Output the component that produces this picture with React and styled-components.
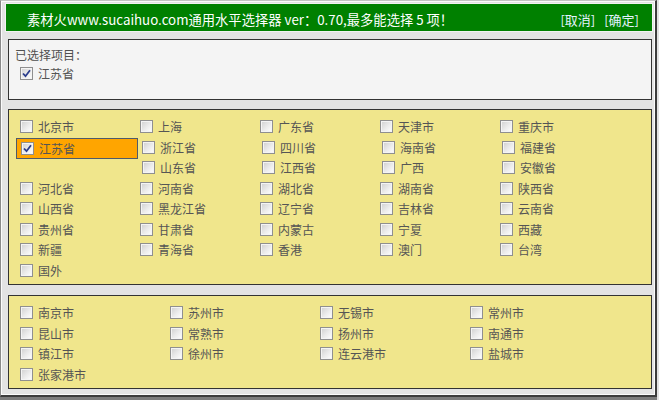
import React from "react";
import styled, { createGlobalStyle } from "styled-components";

const Global = createGlobalStyle`
  html, body { margin: 0; padding: 0; background: #e2e2e2; }
  body { font-family: "Noto Sans CJK SC", "Noto Sans", sans-serif; }
  * { box-sizing: border-box; }
`;

const Window = styled.div`
  width: 657px;
  height: 397px;
  background: #e3e3e3;
  border-left: 1px solid #8a8a8a;
  border-top: 1px solid #c4c4c4;
  border-right: 2px solid #3c3c3c;
  border-bottom: 2px solid #3c3c3c;
  box-shadow: inset 1px 1px 0 #fbfbfb, inset -1px -1px 0 #fbfbfb;
  display: flex;
  flex-direction: column;
`;

const PageBelow = styled.div`
  width: 657px;
  height: 3px;
  background: #7c7c7c;
`;

const Header = styled.div`
  margin: 2px 2px 0 4px;
  height: 29px;
  border: 1px solid #f2f2f2;
  background: #008000;
  color: #ffffff;
  display: flex;
  justify-content: space-between;
  align-items: flex-start;
  padding: 6px 13px 0 21px;
  font-size: 13.3px;
  line-height: 20px;
  white-space: nowrap;
`;

const Title = styled.div``;

const Actions = styled.div`
  display: flex;
  gap: 9px;
  font-size: 13px;
  color: #e4f2ff;
`;

const Action = styled.span`
  cursor: pointer;
`;

const Panel = styled.div`
  margin: ${(p) => p.$top}px 3px 0 7px;
  height: ${(p) => p.$height}px;
  border: 1px solid #333333;
  background: ${(p) => p.$bg};
  padding: ${(p) => p.$pad};
`;

const Label = styled.div`
  font-size: 12px;
  line-height: 18px;
  color: #505050;
`;

const Grid = styled.div`
  display: grid;
  grid-template-columns: repeat(${(p) => p.$cols}, ${(p) => p.$col}px);
  grid-auto-rows: 20.5px;
  margin-left: ${(p) => p.$indent || 0}px;
`;

const Item = styled.div`
  display: flex;
  align-items: flex-start;
  height: ${(p) => (p.$selected ? "21.5px" : "20.5px")};
  width: ${(p) => (p.$selected ? "122px" : "auto")};
  justify-self: start;
  align-self: start;
  grid-row: ${(p) => (p.$selected ? "span 2" : "auto")};
  margin-left: ${(p) => (p.$nudge ? 2 : 0)}px;
  background: ${(p) => (p.$selected ? "#ffa500" : "transparent")};
  border: ${(p) => (p.$selected ? "1px solid #4f5a6a" : "none")};
  font-size: 12px;
  line-height: 20.5px;
  color: #555555;
  white-space: nowrap;
  cursor: pointer;
`;

const Box = styled.span`
  flex: none;
  width: 13px;
  height: 13px;
  margin: 3px 5px 0 4px;
  border: 1px solid #8f8f8f;
  background: linear-gradient(135deg, #cfcfcf 0%, #ececec 55%, #ffffff 100%);
  box-shadow: inset 0 0 0 1px #f4f4f4;
  display: flex;
  align-items: center;
  justify-content: center;
`;

const Check = () => (
  <svg width="9" height="9" viewBox="0 0 9 9">
    <path d="M1 4.5 L3.5 7.2 L8 1.2" fill="none" stroke="#2b3d8c" strokeWidth="1.8" />
  </svg>
);

const Option = ({ name, checked, selected, nudge }) => (
  <Item $selected={selected} $nudge={nudge}>
    <Box>{checked && <Check />}</Box>
    <span>{name}</span>
  </Item>
);

const provinces = [
  "北京市", "上海", "广东省", "天津市", "重庆市",
  "江苏省", "浙江省", "四川省", "海南省", "福建省",
  "山东省", "江西省", "广西", "安徽省",
  "河北省", "河南省", "湖北省", "湖南省", "陕西省",
  "山西省", "黑龙江省", "辽宁省", "吉林省", "云南省",
  "贵州省", "甘肃省", "内蒙古", "宁夏", "西藏",
  "新疆", "青海省", "香港", "澳门", "台湾",
  "国外",
];

const nudged = new Set(["浙江省", "四川省", "海南省", "福建省", "山东省", "江西省", "广西", "安徽省"]);

const cities = [
  "南京市", "苏州市", "无锡市", "常州市",
  "昆山市", "常熟市", "扬州市", "南通市",
  "镇江市", "徐州市", "连云港市", "盐城市",
  "张家港市",
];

export default function App() {
  return (
    <>
      <Global />
      <Window>
        <Header>
          <Title>素材火www.sucaihuo.com通用水平选择器 ver：0.70,最多能选择 5 项！</Title>
          <Actions>
            <Action>[取消]</Action>
            <Action>[确定]</Action>
          </Actions>
        </Header>
        <Panel $top={7} $height={61} $bg="#f4f4f4" $pad="6px 7px 0 6px">
          <Label>已选择项目：</Label>
          <Grid $cols={5} $col={120} $indent={1}>
            <Option name="江苏省" checked />
          </Grid>
        </Panel>
        <Panel $top={9} $height={176} $bg="#f0e68c" $pad="7px 7px 3px 7px">
          <Grid $cols={5} $col={120}>
            {provinces.map((p) => (
              <Option
                key={p}
                name={p}
                checked={p === "江苏省"}
                selected={p === "江苏省"}
                nudge={nudged.has(p)}
              />
            ))}
          </Grid>
        </Panel>
        <Panel $top={10} $height={94} $bg="#f0e68c" $pad="7px 7px 3px 7px">
          <Grid $cols={4} $col={150}>
            {cities.map((c) => (
              <Option key={c} name={c} />
            ))}
          </Grid>
        </Panel>
      </Window>
      <PageBelow />
    </>
  );
}
